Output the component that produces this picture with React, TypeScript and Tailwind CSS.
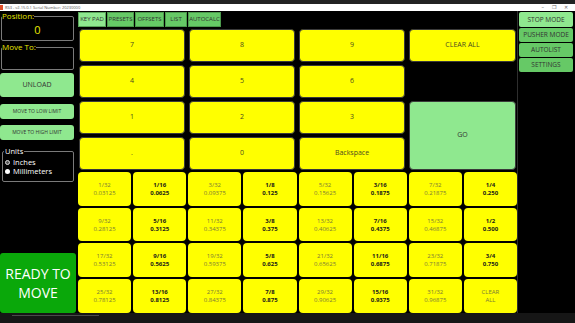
import React from "react";

const fracs: [string, string, boolean][] = [
  ["1/32", "0.03125", false], ["1/16", "0.0625", true], ["3/32", "0.09375", false], ["1/8", "0.125", true],
  ["5/32", "0.15625", false], ["3/16", "0.1875", true], ["7/32", "0.21875", false], ["1/4", "0.250", true],
  ["9/32", "0.28125", false], ["5/16", "0.3125", true], ["11/32", "0.34375", false], ["3/8", "0.375", true],
  ["13/32", "0.40625", false], ["7/16", "0.4375", true], ["15/32", "0.46875", false], ["1/2", "0.500", true],
  ["17/32", "0.53125", false], ["9/16", "0.5625", true], ["19/32", "0.59375", false], ["5/8", "0.625", true],
  ["21/32", "0.65625", false], ["11/16", "0.6875", true], ["23/32", "0.71875", false], ["3/4", "0.750", true],
  ["25/32", "0.78125", false], ["13/16", "0.8125", true], ["27/32", "0.84375", false], ["7/8", "0.875", true],
  ["29/32", "0.90625", false], ["15/16", "0.9375", true], ["31/32", "0.96875", false], ["CLEAR", "ALL", false],
];

const Key = ({ label, className = "" }: { label: string; className?: string }) => (
  <div className={`flex items-center justify-center rounded-[4px] border border-[#3a3a3a] bg-[#ffff00] text-[7px] text-[#4a4a20] ${className}`}>
    {label}
  </div>
);

export default function App() {
  return (
    <div className="w-[575px] h-[323px] bg-black flex flex-col overflow-hidden font-['Open_Sans',sans-serif]">
      <div className="h-[4px] bg-[#222222] shrink-0" />
      <div className="h-[7px] bg-white shrink-0 flex items-center">
        <div className="w-[3px] h-[5px] bg-[#e0502a]" />
        <span className="ml-[2px] text-[4px] leading-[4px] text-[#555]">RS3 - v2.15.0.1 Serial Number: 20230000</span>
        <div className="ml-auto flex items-center gap-[8px] mr-[7px] text-[5px] leading-[5px] text-[#666]">
          <span>–</span>
          <span>❐</span>
          <span>✕</span>
        </div>
      </div>

      <div className="flex h-[302px] shrink-0">
        {/* Left panel */}
        <div className="w-[76px] flex flex-col shrink-0">
          <fieldset className="mt-[1px] ml-[1px] w-[73px] h-[29px] border border-[#7a7a7a] rounded-[2px] px-0 pt-[3px]">
            <legend className="text-[8px] leading-[8px] text-[#e8e800]">Position:</legend>
            <div className="w-full text-center text-[11px] leading-[14px] text-[#e8e800]">0</div>
          </fieldset>
          <fieldset className="mt-[2px] ml-[1px] w-[73px] h-[27px] border border-[#7a7a7a] rounded-[2px] px-0 pt-0">
            <legend className="text-[8px] leading-[8px] text-[#e8e800]">Move To:</legend>
          </fieldset>
          <div className="mt-[3px] w-[74px] h-[24px] rounded-[3px] bg-[#8fe88f] flex items-center justify-center text-[7px] text-[#333]">UNLOAD</div>
          <div className="mt-[7px] w-[74px] h-[15px] rounded-[3px] bg-[#8fe88f] flex items-center justify-center text-[5px] text-[#333]">MOVE TO LOW LIMIT</div>
          <div className="mt-[6px] w-[74px] h-[15px] rounded-[3px] bg-[#8fe88f] flex items-center justify-center text-[5px] text-[#333]">MOVE TO HIGH LIMIT</div>
          <fieldset className="mt-[8px] ml-[2px] w-[72px] h-[34px] border border-[#7a7a7a] rounded-[2px] px-0 pt-0 flex flex-col">
            <legend className="ml-[1px] text-[7.5px] leading-[7px] text-white px-[1px]">Units</legend>
            <div className="flex items-center mt-[3px] ml-[2px] gap-[3px] text-[7.5px] leading-[9px] text-white">
              <span className="w-[5px] h-[5px] rounded-full border-[1.5px] border-[#ddd] bg-[#555] inline-block" />
              Inches
            </div>
            <div className="flex items-center ml-[2px] gap-[3px] text-[7.5px] leading-[9px] text-white">
              <span className="w-[5px] h-[5px] rounded-full bg-white inline-block" />
              Millimeters
            </div>
          </fieldset>
          <div className="mt-auto w-[76px] h-[60px] rounded-[3px] bg-[#0aa80a] flex flex-col items-center justify-center text-white text-[14px] leading-[19px]">
            <span>READY TO</span>
            <span>MOVE</span>
          </div>
        </div>

        {/* Center */}
        <div className="ml-[2px] w-[439px] flex flex-col shrink-0">
          <div className="mt-[1px] h-[15px] flex gap-[1px] text-[6px] text-[#333]">
            <div className="w-[28px] bg-[#8fe88f] border border-[#5aa55a] flex items-center justify-center">KEY PAD</div>
            <div className="w-[27px] bg-[#66c966] border border-[#4c9a4c] flex items-center justify-center">PRESETS</div>
            <div className="w-[29px] bg-[#66c966] border border-[#4c9a4c] flex items-center justify-center">OFFSETS</div>
            <div className="w-[22px] bg-[#66c966] border border-[#4c9a4c] flex items-center justify-center">LIST</div>
            <div className="w-[33px] bg-[#66c966] border border-[#4c9a4c] flex items-center justify-center">AUTOCALC</div>
          </div>
          <div className="mt-[2px] ml-[1px] grid grid-cols-[106px_106px_106px_107px] grid-rows-[33px_33px_33px_33px] gap-x-[4px] gap-y-[3px]">
            <Key label="7" />
            <Key label="8" />
            <Key label="9" />
            <Key label="CLEAR ALL" />
            <Key label="4" />
            <Key label="5" />
            <Key label="6" />
            <div />
            <Key label="1" />
            <Key label="2" />
            <Key label="3" />
            <div className="row-span-2 flex items-center justify-center rounded-[4px] border border-[#3a3a3a] bg-[#8fe88f] text-[7px] text-[#333]">GO</div>
            <Key label="." />
            <Key label="0" />
            <Key label="Backspace" />
          </div>
          <div className="mt-[2px] grid grid-cols-8 grid-rows-4 gap-[2px] h-[142px]">
            {fracs.map(([a, b, bold], i) => (
              <div
                key={i}
                className={`rounded-[4px] bg-[#ffff00] flex flex-col items-center justify-center text-[6px] leading-[8px] ${bold ? "font-bold text-[#1a1a1a]" : "text-[#7a7a3a]"}`}
              >
                <span>{a}</span>
                <span>{b}</span>
              </div>
            ))}
          </div>
        </div>

        {/* Right */}
        <div className="flex-1 border-l border-[#2e2e2e] flex flex-col pl-[1px] pt-[1px]">
          <div className="w-[54px] flex flex-col gap-[1px] text-[6.5px] text-[#333]">
            <div className="h-[15px] rounded-[2px] bg-[#8fe88f] flex items-center justify-center">STOP MODE</div>
            <div className="h-[14px] rounded-[2px] bg-[#66c966] flex items-center justify-center">PUSHER MODE</div>
            <div className="h-[14px] rounded-[2px] bg-[#66c966] flex items-center justify-center">AUTOLIST</div>
            <div className="h-[14px] rounded-[2px] bg-[#66c966] flex items-center justify-center">SETTINGS</div>
          </div>
        </div>
      </div>

      <div className="flex-1 bg-[#161616]">
        <div className="mt-[2px] ml-[12px] w-[87px] h-[1px] bg-[#4a4a4a]" />
      </div>
    </div>
  );
}
